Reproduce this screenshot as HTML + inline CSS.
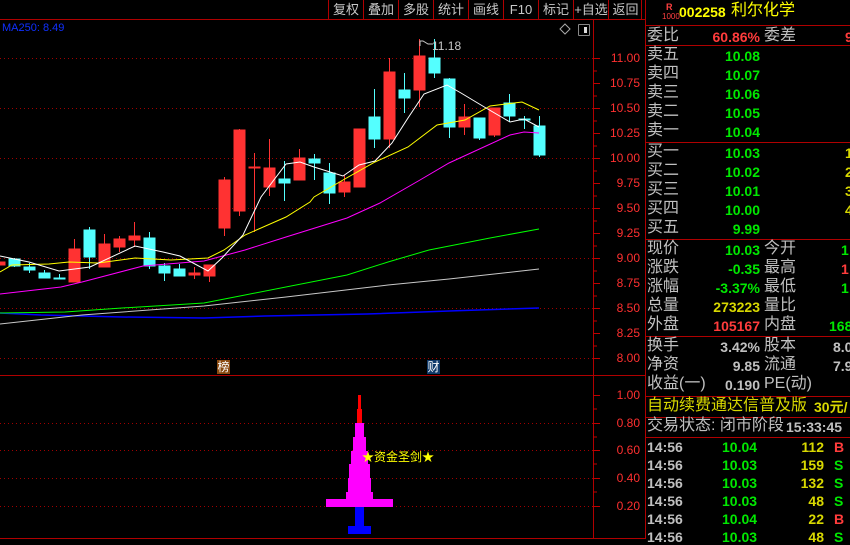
<!DOCTYPE html>
<html><head><meta charset="utf-8"><style>
*{margin:0;padding:0;box-sizing:border-box}
body{width:850px;height:539px;background:#000;overflow:hidden;position:relative;font-family:"Liberation Sans","WenQuanYi Zen Hei","Noto Sans CJK SC",sans-serif}
.t{position:absolute;white-space:nowrap;line-height:1}
.l{color:#c0c0c0;font-size:16px}
.g{color:#00e800;font-size:14px;font-weight:bold}
.y{color:#d8d800;font-size:14px;font-weight:bold}
.r{color:#ff3c3c;font-size:14px;font-weight:bold}
.w{color:#c0c0c0;font-size:14px;font-weight:bold}
.hl{position:absolute;left:645px;width:205px;height:1px;background:#b00000}
.btn{position:absolute;top:0;height:19px;color:#c8c8c8;font-size:13px;text-align:center;line-height:19px}
</style></head><body>
<svg width="850" height="539" style="position:absolute;left:0;top:0" shape-rendering="crispEdges">
<line x1="0" y1="19.5" x2="645" y2="19.5" stroke="#b00000"/>
<g stroke="#b00000"><line x1="328.5" y1="0" x2="328.5" y2="19"/><line x1="363.5" y1="0" x2="363.5" y2="19"/><line x1="398.5" y1="0" x2="398.5" y2="19"/><line x1="433.5" y1="0" x2="433.5" y2="19"/><line x1="468.5" y1="0" x2="468.5" y2="19"/><line x1="503.5" y1="0" x2="503.5" y2="19"/><line x1="538.5" y1="0" x2="538.5" y2="19"/><line x1="573.5" y1="0" x2="573.5" y2="19"/><line x1="608.5" y1="0" x2="608.5" y2="19"/><line x1="641.5" y1="0" x2="641.5" y2="19"/></g>
<line x1="593.5" y1="20" x2="593.5" y2="539" stroke="#b00000"/>
<line x1="0" y1="375.5" x2="645" y2="375.5" stroke="#b00000"/>
<line x1="645.5" y1="0" x2="645.5" y2="539" stroke="#b00000"/>
<line x1="0" y1="538.5" x2="645" y2="538.5" stroke="#b00000"/>
<g stroke="#a00000" stroke-dasharray="1,3">
<line x1="0" y1="58.5" x2="593" y2="58.5"/><line x1="0" y1="108.5" x2="593" y2="108.5"/><line x1="0" y1="158.5" x2="593" y2="158.5"/><line x1="0" y1="208.5" x2="593" y2="208.5"/><line x1="0" y1="258.5" x2="593" y2="258.5"/><line x1="0" y1="308.5" x2="593" y2="308.5"/><line x1="0" y1="358.5" x2="593" y2="358.5"/>
<line x1="0" y1="423.5" x2="593" y2="423.5"/><line x1="0" y1="450.5" x2="593" y2="450.5"/><line x1="0" y1="478.5" x2="593" y2="478.5"/><line x1="0" y1="506.5" x2="593" y2="506.5"/>
</g>
<g stroke="#c00000">
<line x1="593" y1="58.5" x2="600" y2="58.5"/><line x1="593" y1="71" x2="597" y2="71"/><line x1="593" y1="83.5" x2="600" y2="83.5"/><line x1="593" y1="96" x2="597" y2="96"/><line x1="593" y1="108.5" x2="600" y2="108.5"/><line x1="593" y1="121" x2="597" y2="121"/><line x1="593" y1="133.5" x2="600" y2="133.5"/><line x1="593" y1="146" x2="597" y2="146"/><line x1="593" y1="158.5" x2="600" y2="158.5"/><line x1="593" y1="171" x2="597" y2="171"/><line x1="593" y1="183.5" x2="600" y2="183.5"/><line x1="593" y1="196" x2="597" y2="196"/><line x1="593" y1="208.5" x2="600" y2="208.5"/><line x1="593" y1="221" x2="597" y2="221"/><line x1="593" y1="233.5" x2="600" y2="233.5"/><line x1="593" y1="246" x2="597" y2="246"/><line x1="593" y1="258.5" x2="600" y2="258.5"/><line x1="593" y1="271" x2="597" y2="271"/><line x1="593" y1="283.5" x2="600" y2="283.5"/><line x1="593" y1="296" x2="597" y2="296"/><line x1="593" y1="308.5" x2="600" y2="308.5"/><line x1="593" y1="321" x2="597" y2="321"/><line x1="593" y1="333.5" x2="600" y2="333.5"/><line x1="593" y1="346" x2="597" y2="346"/><line x1="593" y1="358.5" x2="600" y2="358.5"/>
<line x1="593" y1="395.5" x2="600" y2="395.5"/><line x1="593" y1="409" x2="597" y2="409"/><line x1="593" y1="423.5" x2="600" y2="423.5"/><line x1="593" y1="437" x2="597" y2="437"/><line x1="593" y1="450.5" x2="600" y2="450.5"/><line x1="593" y1="464" x2="597" y2="464"/><line x1="593" y1="478.5" x2="600" y2="478.5"/><line x1="593" y1="492" x2="597" y2="492"/><line x1="593" y1="506.5" x2="600" y2="506.5"/>
</g>
<g stroke-width="1">
<g stroke="#ff3232" fill="#ff3232">
<line x1="-0.5" y1="262" x2="-0.5" y2="265"/><rect x="-6" y="262" width="11" height="3"/>
<line x1="74.5" y1="239" x2="74.5" y2="282"/><rect x="69" y="249" width="11" height="33"/>
<line x1="104.5" y1="234" x2="104.5" y2="267"/><rect x="99" y="244" width="11" height="23"/>
<line x1="119.5" y1="236" x2="119.5" y2="252"/><rect x="114" y="239" width="11" height="8"/>
<line x1="134.5" y1="222" x2="134.5" y2="247"/><rect x="129" y="236" width="11" height="4"/>
<line x1="194.5" y1="267" x2="194.5" y2="279"/><rect x="189" y="273" width="11" height="2"/>
<line x1="209.5" y1="265" x2="209.5" y2="282"/><rect x="204" y="265" width="11" height="11"/>
<line x1="224.5" y1="177" x2="224.5" y2="236"/><rect x="219" y="180" width="11" height="48"/>
<line x1="239.5" y1="129" x2="239.5" y2="216"/><rect x="234" y="130" width="11" height="81"/>
<line x1="254.5" y1="153" x2="254.5" y2="232"/><rect x="249" y="167" width="11" height="1"/>
<line x1="269.5" y1="139" x2="269.5" y2="196"/><rect x="264" y="168" width="11" height="19"/>
<line x1="299.5" y1="149" x2="299.5" y2="180"/><rect x="294" y="158" width="11" height="22"/>
<line x1="344.5" y1="175" x2="344.5" y2="197"/><rect x="339" y="182" width="11" height="10"/>
<line x1="359.5" y1="129" x2="359.5" y2="187"/><rect x="354" y="129" width="11" height="58"/>
<line x1="389.5" y1="58" x2="389.5" y2="148"/><rect x="384" y="72" width="11" height="67"/>
<line x1="419.5" y1="39" x2="419.5" y2="107"/><rect x="414" y="56" width="11" height="34"/>
<line x1="464.5" y1="104" x2="464.5" y2="135"/><rect x="459" y="117" width="11" height="10"/>
<line x1="494.5" y1="108" x2="494.5" y2="137"/><rect x="489" y="108" width="11" height="27"/>
</g>
<g stroke="#54ffff" fill="#54ffff">
<line x1="14.5" y1="258" x2="14.5" y2="267"/><rect x="9" y="259" width="11" height="7"/>
<line x1="29.5" y1="263" x2="29.5" y2="273"/><rect x="24" y="267" width="11" height="3"/>
<line x1="44.5" y1="270" x2="44.5" y2="278"/><rect x="39" y="273" width="11" height="5"/>
<line x1="59.5" y1="274" x2="59.5" y2="279"/><rect x="54" y="278" width="11" height="1"/>
<line x1="89.5" y1="227" x2="89.5" y2="269"/><rect x="84" y="230" width="11" height="27"/>
<line x1="149.5" y1="232" x2="149.5" y2="269"/><rect x="144" y="238" width="11" height="28"/>
<line x1="164.5" y1="263" x2="164.5" y2="281"/><rect x="159" y="266" width="11" height="7"/>
<line x1="179.5" y1="264" x2="179.5" y2="276"/><rect x="174" y="269" width="11" height="7"/>
<line x1="284.5" y1="161" x2="284.5" y2="201"/><rect x="279" y="179" width="11" height="4"/>
<line x1="314.5" y1="154" x2="314.5" y2="180"/><rect x="309" y="159" width="11" height="4"/>
<line x1="329.5" y1="163" x2="329.5" y2="204"/><rect x="324" y="173" width="11" height="20"/>
<line x1="374.5" y1="89" x2="374.5" y2="148"/><rect x="369" y="117" width="11" height="22"/>
<line x1="404.5" y1="73" x2="404.5" y2="113"/><rect x="399" y="90" width="11" height="8"/>
<line x1="434.5" y1="39" x2="434.5" y2="78"/><rect x="429" y="58" width="11" height="15"/>
<line x1="449.5" y1="78" x2="449.5" y2="138"/><rect x="444" y="79" width="11" height="48"/>
<line x1="479.5" y1="118" x2="479.5" y2="140"/><rect x="474" y="118" width="11" height="20"/>
<line x1="509.5" y1="94" x2="509.5" y2="122"/><rect x="504" y="103" width="11" height="13"/>
<line x1="524.5" y1="116" x2="524.5" y2="129"/><rect x="519" y="119" width="11" height="1"/>
<line x1="539.5" y1="116" x2="539.5" y2="157"/><rect x="534" y="126" width="11" height="29"/>
</g>
</g>
<g fill="none" stroke-width="1" shape-rendering="auto">
<polyline stroke="#0000ff" stroke-width="1.5" points="0,313 41,315 122,317 204,318 265,316 367,314 449,311 539,308"/>
<polyline stroke="#c8c8c8" points="0,324 82,315 204,306 286,297 388,285 449,279 539,269"/>
<polyline stroke="#00ff00" points="0,313 65,312 122,308 204,303 245,295 347,275 388,262 429,250 490,238 539,229"/>
<polyline stroke="#ff00ff" points="0,294 61,287 82,282 143,266 204,261 245,250 286,237 347,218 380,203 420,180 449,163 510,135 524,132 539,133"/>
<polyline stroke="#ffff00" points="0,272 12,265 49,264 69,262 98,263 135,258 171,260 208,258 224,250 245,235 286,217 310,202 314,197 343,180 375,162 408,147 437,125 465,120 490,106 522,102 539,110"/>
<polyline stroke="#ffffff" points="0,256 29,262 59,271 90,267 135,246 163,252 180,256 208,271 222,258 243,235 261,197 286,164 300,162 314,167 343,176 359,165 375,161 392,143 408,118 424,94 447,85 461,93 486,108 510,122 524,119 539,127"/>
<polyline stroke="#c8c8c8" points="420,46 420,41 423,41 428,44 433,44"/>
</g>
<polygon points="565,24 570,29 565,34 560,29" fill="none" stroke="#aaa" shape-rendering="auto"/>
<rect x="578.5" y="24.5" width="11" height="11" fill="none" stroke="#888" rx="1"/>
<rect x="584" y="27" width="3" height="6" fill="#ddd"/>
<rect x="358" y="395" width="3" height="14" fill="#ff0000"/>
<rect x="357" y="409" width="5" height="14" fill="#ff0000"/>
<g fill="#ff00ff">
<rect x="355" y="423" width="9" height="14"/><rect x="353" y="437" width="13" height="14"/><rect x="351" y="451" width="17" height="13"/><rect x="349" y="464" width="21" height="14"/><rect x="348" y="478" width="23" height="14"/><rect x="346" y="492" width="27" height="7"/><rect x="326" y="499" width="67" height="8"/>
</g>
<rect x="355" y="507" width="9" height="19" fill="#0000ff"/>
<rect x="348" y="526" width="23" height="8" fill="#0000ff"/>
</svg>
<div class="btn" style="left:329px;width:34px">复权</div>
<div class="btn" style="left:364px;width:34px">叠加</div>
<div class="btn" style="left:399px;width:34px">多股</div>
<div class="btn" style="left:434px;width:34px">统计</div>
<div class="btn" style="left:469px;width:34px">画线</div>
<div class="btn" style="left:504px;width:34px">F10</div>
<div class="btn" style="left:539px;width:34px">标记</div>
<div class="btn" style="left:573px;width:36px">+自选</div>
<div class="btn" style="left:609px;width:33px">返回</div>
<div class="t" style="left:2px;top:23px;color:#1030ff;font-size:11px">MA250: 8.49</div>
<div class="t" style="left:432px;top:40px;color:#c8c8c8;font-size:12px">11.18</div>
<div style="position:absolute;left:600px;top:0;width:40px;height:539px;color:#ff3030;font-size:12px;line-height:1">
<div class="t" style="right:0;top:52px">11.00</div><div class="t" style="right:0;top:77px">10.75</div><div class="t" style="right:0;top:102px">10.50</div><div class="t" style="right:0;top:127px">10.25</div><div class="t" style="right:0;top:152px">10.00</div><div class="t" style="right:0;top:177px">9.75</div><div class="t" style="right:0;top:202px">9.50</div><div class="t" style="right:0;top:227px">9.25</div><div class="t" style="right:0;top:252px">9.00</div><div class="t" style="right:0;top:277px">8.75</div><div class="t" style="right:0;top:302px">8.50</div><div class="t" style="right:0;top:327px">8.25</div><div class="t" style="right:0;top:352px">8.00</div>
<div class="t" style="right:0;top:389px">1.00</div><div class="t" style="right:0;top:417px">0.80</div><div class="t" style="right:0;top:444px">0.60</div><div class="t" style="right:0;top:472px">0.40</div><div class="t" style="right:0;top:500px">0.20</div>
</div>
<div class="t" style="left:217px;top:360px;width:13px;height:14px;background:#8a4a10;color:#fff;font-size:12px;text-align:center;line-height:14px">榜</div>
<div class="t" style="left:427px;top:360px;width:13px;height:14px;background:#103a6a;color:#fff;font-size:12px;text-align:center;line-height:14px">财</div>
<div class="t" style="left:362px;top:451px;color:#ffff00;font-size:12px">★资金圣剑★</div>
<div class="t" style="left:666px;top:3px;color:#ff4040;font-size:9px;font-weight:bold">R</div>
<div class="t" style="left:662px;top:13px;color:#ff4040;font-size:8px">1000</div>
<div class="t" style="left:679px;top:5px;color:#ffff00;font-size:14px;font-weight:bold">002258</div>
<div class="t" style="left:731px;top:3px;color:#ffff00;font-size:16px">利尔化学</div>
<div class="hl" style="top:25px"></div>
<div class="t l" style="left:647px;top:28px">委比</div><div class="t r" style="left:700px;top:30px;width:60px;text-align:right">60.86%</div><div class="t l" style="left:764px;top:28px">委差</div><div class="t r" style="left:845px;top:30px">9</div>
<div class="hl" style="top:45px"></div>
<div class="t l" style="left:647px;top:47px">卖五</div><div class="t g" style="left:700px;top:49px;width:60px;text-align:right">10.08</div>
<div class="t l" style="left:647px;top:66px">卖四</div><div class="t g" style="left:700px;top:68px;width:60px;text-align:right">10.07</div>
<div class="t l" style="left:647px;top:85px">卖三</div><div class="t g" style="left:700px;top:87px;width:60px;text-align:right">10.06</div>
<div class="t l" style="left:647px;top:104px">卖二</div><div class="t g" style="left:700px;top:106px;width:60px;text-align:right">10.05</div>
<div class="t l" style="left:647px;top:123px">卖一</div><div class="t g" style="left:700px;top:125px;width:60px;text-align:right">10.04</div>
<div class="hl" style="top:142px"></div>
<div class="t l" style="left:647px;top:144px">买一</div><div class="t g" style="left:700px;top:146px;width:60px;text-align:right">10.03</div><div class="t y" style="left:845px;top:146px">1</div>
<div class="t l" style="left:647px;top:163px">买二</div><div class="t g" style="left:700px;top:165px;width:60px;text-align:right">10.02</div><div class="t y" style="left:845px;top:165px">2</div>
<div class="t l" style="left:647px;top:182px">买三</div><div class="t g" style="left:700px;top:184px;width:60px;text-align:right">10.01</div><div class="t y" style="left:845px;top:184px">3</div>
<div class="t l" style="left:647px;top:201px">买四</div><div class="t g" style="left:700px;top:203px;width:60px;text-align:right">10.00</div><div class="t y" style="left:845px;top:203px">4</div>
<div class="t l" style="left:647px;top:220px">买五</div><div class="t g" style="left:700px;top:222px;width:60px;text-align:right">9.99</div>
<div class="hl" style="top:239px"></div>
<div class="t l" style="left:647px;top:241px">现价</div><div class="t g" style="left:700px;top:243px;width:60px;text-align:right">10.03</div><div class="t l" style="left:764px;top:241px">今开</div><div class="t g" style="left:841px;top:243px">1</div>
<div class="t l" style="left:647px;top:260px">涨跌</div><div class="t g" style="left:700px;top:262px;width:60px;text-align:right">-0.35</div><div class="t l" style="left:764px;top:260px">最高</div><div class="t r" style="left:841px;top:262px">1</div>
<div class="t l" style="left:647px;top:279px">涨幅</div><div class="t g" style="left:700px;top:281px;width:60px;text-align:right">-3.37%</div><div class="t l" style="left:764px;top:279px">最低</div><div class="t g" style="left:841px;top:281px">1</div>
<div class="t l" style="left:647px;top:298px">总量</div><div class="t y" style="left:700px;top:300px;width:60px;text-align:right">273223</div><div class="t l" style="left:764px;top:298px">量比</div>
<div class="t l" style="left:647px;top:317px">外盘</div><div class="t r" style="left:700px;top:319px;width:60px;text-align:right">105167</div><div class="t l" style="left:764px;top:317px">内盘</div><div class="t g" style="left:829px;top:319px">168</div>
<div class="hl" style="top:336px"></div>
<div class="t l" style="left:647px;top:338px">换手</div><div class="t w" style="left:700px;top:340px;width:60px;text-align:right">3.42%</div><div class="t l" style="left:764px;top:338px">股本</div><div class="t w" style="left:833px;top:340px">8.0</div>
<div class="t l" style="left:647px;top:357px">净资</div><div class="t w" style="left:700px;top:359px;width:60px;text-align:right">9.85</div><div class="t l" style="left:764px;top:357px">流通</div><div class="t w" style="left:833px;top:359px">7.9</div>
<div class="t l" style="left:647px;top:376px">收益(一)</div><div class="t w" style="left:700px;top:378px;width:60px;text-align:right">0.190</div><div class="t l" style="left:764px;top:376px">PE(动)</div>
<div class="hl" style="top:396px"></div>
<div class="t" style="left:647px;top:398px;color:#d8d800;font-size:16px">自动续费通达信普及版</div><div class="t y" style="left:814px;top:400px">30元/</div>
<div class="hl" style="top:417px"></div>
<div class="t l" style="left:647px;top:418px">交易状态: 闭市阶段</div><div class="t w" style="left:786px;top:420px">15:33:45</div>
<div class="hl" style="top:437px"></div>
<div class="t w" style="left:647px;top:440px">14:56</div><div class="t g" style="left:722px;top:440px">10.04</div><div class="t y" style="left:790px;top:440px;width:34px;text-align:right">112</div><div class="t r" style="left:834px;top:440px">B</div>
<div class="t w" style="left:647px;top:458px">14:56</div><div class="t g" style="left:722px;top:458px">10.03</div><div class="t y" style="left:790px;top:458px;width:34px;text-align:right">159</div><div class="t g" style="left:834px;top:458px">S</div>
<div class="t w" style="left:647px;top:476px">14:56</div><div class="t g" style="left:722px;top:476px">10.03</div><div class="t y" style="left:790px;top:476px;width:34px;text-align:right">132</div><div class="t g" style="left:834px;top:476px">S</div>
<div class="t w" style="left:647px;top:494px">14:56</div><div class="t g" style="left:722px;top:494px">10.03</div><div class="t y" style="left:790px;top:494px;width:34px;text-align:right">48</div><div class="t g" style="left:834px;top:494px">S</div>
<div class="t w" style="left:647px;top:512px">14:56</div><div class="t g" style="left:722px;top:512px">10.04</div><div class="t y" style="left:790px;top:512px;width:34px;text-align:right">22</div><div class="t r" style="left:834px;top:512px">B</div>
<div class="t w" style="left:647px;top:530px">14:56</div><div class="t g" style="left:722px;top:530px">10.03</div><div class="t y" style="left:790px;top:530px;width:34px;text-align:right">48</div><div class="t g" style="left:834px;top:530px">S</div>
</body></html>
